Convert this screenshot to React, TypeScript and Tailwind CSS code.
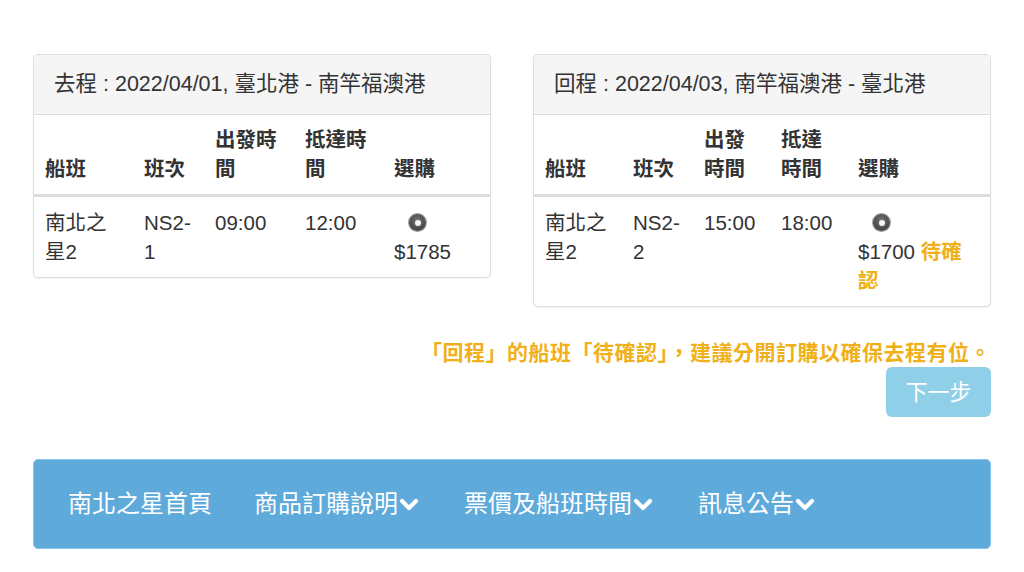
import React from "react";

const FONT = { fontFamily: '"Liberation Sans", "Noto Sans CJK TC", sans-serif' };

function Radio() {
  return (
    <div className="flex h-[29px] items-center">
      <div className="ml-[15px] flex h-[17px] w-[17px] items-center justify-center rounded-full bg-[radial-gradient(circle_at_50%_40%,#777,#2e2e2e)] shadow-[0_0_0_1px_#999]">
        <div className="h-[6px] w-[6px] rounded-full bg-[#f4f4f4]" />
      </div>
    </div>
  );
}

type Row = { ship: string; no: string; dep: string; arr: string; price: string; pending?: boolean };

function Panel({
  title,
  widths,
  row,
}: {
  title: string;
  widths: number[];
  row: Row;
}) {
  return (
    <div className="w-[458px] rounded-[5px] border border-[#dddddd] bg-white shadow-[0_1px_1px_rgba(0,0,0,0.05)]">
      <div className="h-[60px] rounded-t-[5px] border-b border-[#dddddd] bg-[#f5f5f5] px-[20px] pt-[15px] text-[21.5px] leading-[29px] text-[#333]">
        {title}
      </div>
      <table className="w-full table-fixed border-collapse text-[20.5px] leading-[29px] text-[#333]">
        <colgroup>
          {widths.map((w, i) => (
            <col key={i} style={{ width: w }} />
          ))}
          <col />
        </colgroup>
        <thead>
          <tr className="border-b-[3px] border-[#dddddd]">
            <th className="px-[11px] pt-[10px] pb-[11px] text-left align-bottom font-bold">船班</th>
            <th className="px-[11px] pt-[10px] pb-[11px] text-left align-bottom font-bold">班次</th>
            <th className="px-[11px] pt-[10px] pb-[11px] text-left align-bottom font-bold">出發時間</th>
            <th className="px-[11px] pt-[10px] pb-[11px] text-left align-bottom font-bold">抵達時間</th>
            <th className="px-[11px] pt-[10px] pb-[11px] text-left align-bottom font-bold">選購</th>
          </tr>
        </thead>
        <tbody>
          <tr>
            <td className="px-[11px] pt-[11px] pb-[11px] align-top">{row.ship}</td>
            <td className="px-[11px] pt-[11px] pb-[11px] align-top break-words">{row.no}</td>
            <td className="px-[11px] pt-[11px] pb-[11px] align-top">{row.dep}</td>
            <td className="px-[11px] pt-[11px] pb-[11px] align-top">{row.arr}</td>
            <td className="pl-[11px] pr-[14px] pt-[11px] pb-[11px] align-top">
              <Radio />
              <span>{row.price}</span>
              {row.pending && <span className="font-bold text-[#f0b017]"> 待確認</span>}
            </td>
          </tr>
        </tbody>
      </table>
    </div>
  );
}

function Chevron() {
  return (
    <svg width="22" height="16" viewBox="0 0 22 16" className="mt-[2px]">
      <path d="M4 4 L11 11 L18 4" fill="none" stroke="white" strokeWidth="4.2" strokeLinecap="round" strokeLinejoin="round" />
    </svg>
  );
}

export default function App() {
  return (
    <div className="min-h-[572px] w-[1024px] bg-white pt-[54px]" style={FONT}>
      <div className="flex items-start justify-between px-[33px]">
        <Panel
          title="去程 : 2022/04/01, 臺北港 - 南竿福澳港"
          widths={[99, 71, 90, 89]}
          row={{ ship: "南北之星2", no: "NS2-1", dep: "09:00", arr: "12:00", price: "$1785" }}
        />
        <Panel
          title="回程 : 2022/04/03, 南竿福澳港 - 臺北港"
          widths={[88, 71, 77, 77]}
          row={{ ship: "南北之星2", no: "NS2-2", dep: "15:00", arr: "18:00", price: "$1700", pending: true }}
        />
      </div>
      <div className="mt-[31px] flex flex-col items-end px-[33px]">
        <div className="text-[21px] font-bold leading-[29px] tracking-[0.5px] text-[#f0b017]">
          「回程」的船班「待確認」，建議分開訂購以確保去程有位。
        </div>
        <button className="mt-0 flex h-[50px] w-[105px] items-center justify-center rounded-[6px] bg-[#8fd0e8] text-[22px] text-white">
          下一步
        </button>
      </div>
      <div className="mx-[33px] mt-[42px] flex h-[90px] items-center rounded-[5px] border border-[#86c3ea] bg-[#5eaadb] px-[34px] text-[24px] text-white">
        <span>南北之星首頁</span>
        <span className="ml-[42px] flex items-center">
          商品訂購說明
          <Chevron />
        </span>
        <span className="ml-[44px] flex items-center">
          票價及船班時間
          <Chevron />
        </span>
        <span className="ml-[44px] flex items-center">
          訊息公告
          <Chevron />
        </span>
      </div>
    </div>
  );
}
